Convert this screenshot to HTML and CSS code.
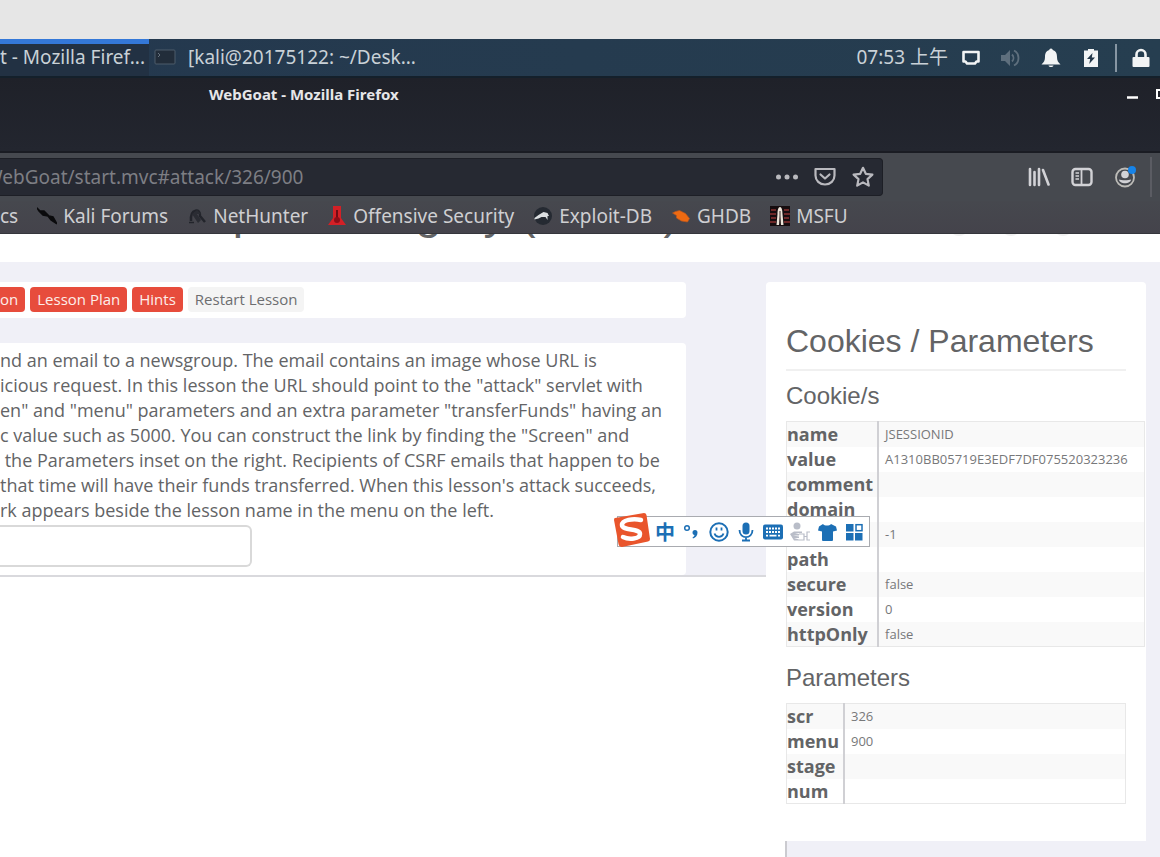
FILE: index.html
```
<!DOCTYPE html>
<html lang="en">
<head>
    <meta charset="UTF-8">
    <meta name="viewport" content="width=device-width, initial-scale=1.0">
    <title>WebGoat - Mozilla Firefox</title>
    <link rel="stylesheet" href="styles.css">
</head>
<body>
    <div class="host-strip"></div>

    <!-- Desktop panel -->
    <header class="panel">
        <button class="task active">t - Mozilla Firef...</button>
        <button class="task">
            <svg width="22" height="16" viewBox="0 0 22 16"><rect x="1" y="1" width="20" height="14" rx="1" fill="#222d3a" stroke="#4d5c6a"/><path d="M4 4l2 2-2 2" fill="none" stroke="#66727e"/></svg>
            [kali@20175122: ~/Desk...
        </button>
        <div class="tray">
            <span class="clock">07:53 上午</span>
            <svg width="20" height="20" viewBox="0 0 20 20"><path d="M2.500 4h15v9.500h-2l-1.500 2h-8l-1.500-2h-2z" fill="none" stroke="#f2f4f5" stroke-width="2.600" stroke-linejoin="round"/></svg>
            <svg width="20" height="20" viewBox="0 0 20 20"><path d="M0 7h4l5-5v16l-5-5H0z" fill="#5e6f7d"/><path d="M11 6.500c2 2 2 5 0 7M13 2.500c6 3 6 12 0 15" fill="none" stroke="#5e6f7d" stroke-width="1.800"/></svg>
            <svg width="20" height="20" viewBox="0 0 20 20"><path d="M10 0.500c1.200 0 1.600.8 1.700 1.600C15 3 16 5.500 16 9c0 3.500 1 5 3.500 7.500H.5C3 14 4 12.500 4 9c0-3.500 1-6 4.300-6.900C8.400 1.300 8.800.5 10 .5zM7.500 17.500h5c-.5 2-4.500 2-5 0z" fill="#f2f4f5"/></svg>
            <svg width="20" height="20" viewBox="0 0 20 20"><path d="M3 2.500h4V1h6v1.500h4V19H3z" fill="#f2f4f5"/><path d="M11.500 5L6 11h3.200l-1 5L14 9.500h-3.200z" fill="#24384a"/></svg>
            <span class="divider"></span>
            <svg width="20" height="20" viewBox="0 0 20 20"><rect x="1.500" y="9" width="17" height="10" rx="1" fill="#f2f4f5"/><path d="M5.500 10V6.500a4.500 4.500 0 0 1 9 0V10" fill="none" stroke="#f2f4f5" stroke-width="2.600"/></svg>
        </div>
    </header>

    <!-- Browser window -->
    <div class="titlebar">
        <span class="window-title">WebGoat - Mozilla Firefox</span>
        <div class="window-buttons">
            <svg width="12" height="12" viewBox="0 0 12 12"><path d="M0 9.500h11" stroke="#fff" stroke-width="2.500"/></svg>
            <svg width="4" height="12" viewBox="0 0 4 12"><path d="M5 2H1v8h4" fill="none" stroke="#fff" stroke-width="2"/></svg>
        </div>
    </div>

    <nav class="toolbar">
        <div class="urlbar">
            <input type="text" value="WebGoat/start.mvc#attack/326/900" aria-label="Address">
            <svg width="22" height="22" viewBox="0 0 22 22" fill="#b9b9be"><circle cx="2.500" cy="11" r="2.500"/><circle cx="11" cy="11" r="2.500"/><circle cx="19.500" cy="11" r="2.500"/></svg>
            <svg width="22" height="22" viewBox="0 0 22 22" fill="none" stroke="#b9b9be" stroke-width="2.200" stroke-linecap="round" stroke-linejoin="round"><path d="M1.500 3h19v6.500c0 5-4 9-9.500 9s-9.500-4-9.500-9z"/><path d="M6.500 8.500l4.500 4 4.500-4"/></svg>
            <svg width="22" height="22" viewBox="0 0 22 22"><path d="M11 1.800l2.800 6 6.600.8-4.900 4.500 1.300 6.500L11 16.400l-5.800 3.200 1.300-6.500L1.600 8.600l6.600-.8z" fill="none" stroke="#b9b9be" stroke-width="2.200" stroke-linejoin="round"/></svg>
        </div>
        <div class="nav-icons">
            <svg width="22" height="22" viewBox="0 0 22 22" stroke="#d2d2d6" stroke-width="2.600" stroke-linecap="round"><path d="M2 3v16M6.500 6v13M11 3v16M15 4l5.500 14.500"/></svg>
            <svg width="22" height="22" viewBox="0 0 22 22" fill="none" stroke="#d2d2d6"><rect x="1.500" y="3" width="19" height="16" rx="3" stroke-width="2.400"/><path d="M10.500 3v16" stroke-width="1.800"/><path d="M4.500 7h3.500M4.500 10h3.500M4.500 13h3.500" stroke-width="1.300"/></svg>
            <svg width="22" height="22" viewBox="0 0 22 22"><circle cx="11" cy="11.500" r="9" fill="none" stroke="#bdbcb8" stroke-width="1.800"/><circle cx="11" cy="8.500" r="3.800" fill="#d2d2d6"/><path d="M5 13.500c2 1 10 1 12 0-.5 5-11.500 5-12 0z" fill="#d2d2d6"/><circle cx="18" cy="4" r="4" fill="#1683e8"/></svg>
        </div>
    </nav>

    <nav class="bookmarks">
        <a href="#">cs</a>
        <a href="#">
            <svg width="20" height="20" viewBox="0 0 20 20"><path d="M0 2l3 3 4 0 5 5 4 1 4 7-6-4-3-4-5-1-4-4z" fill="#0b0b0d" stroke="#0b0b0d" stroke-width="1.500"/></svg>
            Kali Forums
        </a>
        <a href="#">
            <svg width="20" height="20" viewBox="0 0 20 20"><path d="M4 15c-1-13 10-13 9-5l5 6" fill="none" stroke="#22242b" stroke-width="2.500"/><path d="M5 8l5-4 4 4-4 0 4 6-3 3z" fill="#2a2c33"/><path d="M2 16.500h5" stroke="#22242b" stroke-width="1.500"/></svg>
            NetHunter
        </a>
        <a href="#">
            <svg width="20" height="20" viewBox="0 0 20 20"><path d="M6 0h8v12l5 7H1l5-7z" fill="#d32026"/><path d="M9 4h2v8H9z" fill="#6f0d15"/><circle cx="10" cy="14" r="3" fill="#8d0d18"/></svg>
            Offensive Security
        </a>
        <a href="#">
            <svg width="20" height="20" viewBox="0 0 20 20"><circle cx="10" cy="10" r="9" fill="#252a32"/><path d="M1.500 12l4-3 5-3 4 1 1.500 3-1.500 0 0 4-2-3-4 0-3 1.500-4 1z" fill="#dcdfe1"/></svg>
            Exploit-DB
        </a>
        <a href="#">
            <svg width="20" height="20" viewBox="0 0 20 20"><path d="M1.500 7l3-1.500 4-1 6 3 4 5-2 3.500-6-1-5-3 0-2.500z" fill="#ee6a12" stroke="#b7561f" stroke-width=".7"/></svg>
            GHDB
        </a>
        <a href="#">
            <svg width="20" height="20" viewBox="0 0 20 20"><rect width="20" height="20" fill="#160d0f"/><path d="M1 4h5M0 8h6M1 12h5M0 16h6M14 4h5M14 8h6M14 12h5M14 16h6" stroke="#6d2828" stroke-width="2"/><path d="M10 1c2 0 2.500 4 2.500 7l1 11h-2.500l-1-9-1 9H6.500l1-11c0-3 .5-7 2.500-7z" fill="#eee6da"/><path d="M10 5v12" stroke="#3b2d2b"/></svg>
            MSFU
        </a>
    </nav>

    <!-- Lesson page -->
    <div class="lesson-header">
        <h1>ross Site Request Forgery (CSRF)</h1>
        <div class="header-dots"><span></span><span></span><span></span></div>
    </div>

    <div class="page">
        <main>
            <div class="lesson">
                <div class="card lesson-buttons">
                    <button class="btn btn-red cut">on</button>
                    <button class="btn btn-red">Lesson Plan</button>
                    <button class="btn btn-red">Hints</button>
                    <button class="btn">Restart Lesson</button>
                </div>
                <div class="card lesson-text">
                    <p>
                        nd an email to a newsgroup. The email contains an image whose URL is<br>
                        icious request. In this lesson the URL should point to the "attack" servlet with<br>
                        en" and "menu" parameters and an extra parameter "transferFunds" having an<br>
                        c value such as 5000. You can construct the link by finding the "Screen" and<br>
                        &nbsp;the Parameters inset on the right. Recipients of CSRF emails that happen to be<br>
                        that time will have their funds transferred. When this lesson's attack succeeds,<br>
                        rk appears beside the lesson name in the menu on the left.
                    </p>
                    <input type="text" class="lesson-input" aria-label="Title">
                </div>
            </div>
        </main>

        <aside>
            <div class="sidebar">
                <h2>Cookies / Parameters</h2>
                <h3>Cookie/s</h3>
                <table class="cookies">
                    <tr><th>name</th><td>JSESSIONID</td></tr>
                    <tr><th>value</th><td>A1310BB05719E3EDF7DF075520323236</td></tr>
                    <tr><th>comment</th><td></td></tr>
                    <tr><th>domain</th><td></td></tr>
                    <tr><th></th><td>-1</td></tr>
                    <tr><th>path</th><td></td></tr>
                    <tr><th>secure</th><td>false</td></tr>
                    <tr><th>version</th><td>0</td></tr>
                    <tr><th>httpOnly</th><td>false</td></tr>
                </table>
                <h3>Parameters</h3>
                <table class="params">
                    <tr><th>scr</th><td>326</td></tr>
                    <tr><th>menu</th><td>900</td></tr>
                    <tr><th>stage</th><td></td></tr>
                    <tr><th>num</th><td></td></tr>
                </table>
            </div>
            <div class="side-foot"><div></div></div>
        </aside>
    </div>

    <!-- Floating input method bar -->
    <div class="ime">
        <svg class="ime-logo" width="36" height="36" viewBox="0 0 36 36"><path d="M1 6L30 1q2 0 2.500 2L36 27q0 2-2 2.500L8 35q-3 0-3.500-3L0 8q0-2 1-2z" fill="#e9552c"/><path d="M27 8C19 6 8 8 8 13c0 6 18 3 18 9 0 5-11 6-17 3" fill="none" stroke="#fff" stroke-width="4.500" stroke-linecap="round"/></svg>
        <span class="ime-mode">中</span>
        <svg width="20" height="20" viewBox="0 0 20 20"><circle cx="5" cy="6" r="2.300" fill="none" stroke="#1c6fb5" stroke-width="1.500"/><path d="M10.500 10.500a2.500 2.500 0 0 1 5 0c0 3-1.500 5-4.500 6l-.5-1c1.300-.7 1.800-1.500 2-2.500-1.200 0-2-1-2-2.500z" fill="#1c6fb5"/></svg>
        <svg width="20" height="20" viewBox="0 0 20 20"><circle cx="10" cy="10" r="8.700" fill="none" stroke="#1c6fb5" stroke-width="2"/><path d="M7.500 5.500v3M12.500 5.500v3M5.500 11.500c1.500 4.500 7.500 4.500 9 0" fill="none" stroke="#1c6fb5" stroke-width="1.800"/></svg>
        <svg width="20" height="20" viewBox="0 0 20 20"><rect x="6.500" y="0.500" width="7" height="12" rx="3.500" fill="#1c6fb5"/><path d="M3.500 8c0 9.500 13 9.500 13 0M10 15v4M6 18.500h8" fill="none" stroke="#1c6fb5" stroke-width="1.800"/></svg>
        <svg width="20" height="20" viewBox="0 0 20 20"><rect x="0" y="2.500" width="20" height="15" rx="2" fill="#1c6fb5"/><path d="M3 6.500h14M3 10h14" stroke="#fff" stroke-width="2" stroke-dasharray="2 1"/><path d="M3 13.700h2M6.500 13.700h7M15 13.700h2" stroke="#fff" stroke-width="1.800"/></svg>
        <svg width="20" height="20" viewBox="0 0 20 20"><circle cx="7" cy="4" r="3.500" fill="#b9bdc8"/><path d="M0 12l4-2.500h8v1.500H5l4 1v1.500H3l6 1v1.500H4l5 1.500v1H4z" fill="#b9bdc8"/><path d="M9 12h5v6H9M20 10h-3v8h3M14 14.500h3" fill="none" stroke="#b9bdc8" stroke-width="1.200"/></svg>
        <svg width="20" height="20" viewBox="0 0 20 20"><path d="M6 2c1.500 2 6.500 2 8 0l5 2.500 1 4-4 1V18q0 1-1 1H6q-1 0-1-1V9.500l-4-1 1-4z" fill="#1c6fb5"/></svg>
        <svg width="20" height="20" viewBox="0 0 20 20"><path d="M2 2h7.500v7.500H2zM2 11h7.500v7.500H2zM11 11h7.500v7.500H11z" fill="#1c6fb5"/><rect x="12" y="2.700" width="6" height="6" fill="#fff" stroke="#1c6fb5" stroke-width="1.500"/></svg>
    </div>
</body>
</html>
```
FILE: styles.css
```
* {
    margin: 0;
    padding: 0;
    box-sizing: border-box;
}

body {
    position: relative;
    min-height: 100vh;
    display: flex;
    flex-direction: column;
    overflow: hidden;
    background: #fff;
    color: #636466;
    font-family: "Open Sans", "Noto Sans CJK SC", sans-serif;
}

svg {
    flex: none;
    display: block;
}

button,
input {
    border: none;
    font-family: inherit;
}

.host-strip {
    height: 39px;
    background: #e6e6e6;
}

/* Panel */
.panel {
    height: 39px;
    display: flex;
    background: linear-gradient(90deg, #24384e, #263e50);
    border-bottom: 2px solid #14202b;
    font-family: "Noto Sans", "Noto Sans CJK SC", sans-serif;
    color: #c9d1d7;
}

.task {
    display: flex;
    align-items: center;
    gap: 12px;
    padding: 0 0 2px 5px;
    background: none;
    color: inherit;
    font-size: 19px;
    line-height: 24px;
    white-space: nowrap;
}

.task.active {
    width: 149px;
    padding: 0 4px 2px 0;
    justify-content: flex-end;
    background: #223143;
    box-shadow: inset 0 5px #3478d8;
}

.tray {
    margin-left: auto;
    padding-right: 9px;
    display: flex;
    align-items: center;
    gap: 20px;
}

.clock {
    margin-right: -7px;
    padding-bottom: 2px;
    font-size: 19px;
    line-height: 24px;
}

.divider {
    width: 2px;
    height: 28px;
    margin: 0 -6px;
    background: #8796a3;
}

/* Window */
.titlebar {
    height: 75px;
    padding: 6px 0 0 209px;
    display: flex;
    align-items: flex-start;
    justify-content: space-between;
    background: linear-gradient(#1f2129, #23262f);
    border-bottom: 2px solid #1a1c23;
    color: #e6e6e8;
}

.window-title {
    font-family: "Noto Sans", sans-serif;
    font-size: 15px;
    font-weight: 700;
    line-height: 20px;
}

.window-buttons {
    display: flex;
    gap: 17px;
    padding-top: 4px;
}

.toolbar {
    height: 48px;
    padding-right: 8px;
    display: flex;
    align-items: center;
    background: #46494f;
}

.urlbar {
    flex: 1;
    height: 38px;
    padding-right: 8px;
    display: flex;
    align-items: center;
    gap: 16px;
    background: #262932;
    border: 1px solid #1d1f26;
    border-left: none;
    border-radius: 0 4px 4px 0;
}

.urlbar input {
    flex: 1;
    min-width: 0;
    background: none;
    color: #7d7e84;
    font-family: "Noto Sans", sans-serif;
    font-size: 19px;
    text-indent: -15px;
}

.nav-icons {
    height: 40px;
    margin-left: 145px;
    padding-right: 14px;
    display: flex;
    align-items: center;
    gap: 21px;
    border-right: 2px solid #5b5c63;
}

.bookmarks {
    height: 33px;
    padding-bottom: 2px;
    display: flex;
    align-items: center;
    gap: 19px;
    background: linear-gradient(#46484e, #44434b);
    border-bottom: 1px solid #35363c;
    font-family: "Noto Sans", sans-serif;
}

.bookmarks a {
    display: flex;
    align-items: center;
    gap: 6px;
    color: #cfcfd2;
    font-size: 19px;
    line-height: 24px;
    text-decoration: none;
    white-space: nowrap;
}

/* Lesson page */
.lesson-header {
    height: 28px;
    display: flex;
    justify-content: space-between;
    overflow: hidden;
}

.lesson-header h1 {
    margin: -49px 0 0 -39px;
    font: 47px/54px "Liberation Sans", sans-serif;
    white-space: nowrap;
}

.header-dots {
    display: flex;
    gap: 32px;
    margin: -18px 87px 0 0;
}

.header-dots span {
    width: 20px;
    height: 20px;
    border-radius: 10px;
    background: #f0f0f0;
}

.page {
    flex: 1;
    display: grid;
    grid-template-columns: 1fr 394px;
}

.lesson {
    padding: 20px 80px 0 0;
    background: #f0f0f7;
    border-bottom: 2px solid #d9d9dd;
}

.card {
    background: #fff;
    border-radius: 0 4px 4px 0;
}

.lesson-buttons {
    display: flex;
    gap: 5px;
    padding: 5px 0 6px;
    margin-bottom: 25px;
}

.btn {
    height: 25px;
    padding: 0 7px;
    border-radius: 4px;
    background: #f4f4f4;
    color: #6d6e70;
    font-size: 15px;
    line-height: 25px;
}

.btn-red {
    background: #e74c3c;
    color: #fdeeea;
}

.btn.cut {
    padding-left: 0;
    border-radius: 0 4px 4px 0;
}

.lesson-text {
    padding: 5px 0 8px;
}

.lesson-text p {
    font-size: 18px;
    line-height: 25px;
    white-space: nowrap;
}

.lesson-input {
    display: block;
    width: 252px;
    height: 42px;
    margin-top: 2px;
    background: #fff;
    border: 2px solid #d9d9d9;
    border-left: none;
    border-radius: 0 6px 6px 0;
}

/* Sidebar */
aside {
    display: flex;
    flex-direction: column;
    padding: 20px 0 0;
    background: #f0f0f7;
}

.sidebar {
    margin-right: 14px;
    padding: 40px 20px 37px;
    background: #fff;
    border-radius: 4px 4px 0 0;
}

.sidebar h2,
.sidebar h3 {
    font-family: "Liberation Sans", sans-serif;
    font-weight: 400;
}

.sidebar h2 {
    height: 49px;
    font-size: 32px;
    line-height: 38px;
    border-bottom: 2px solid #f0f0f0;
}

.sidebar h3 {
    padding: 10px 0;
    font-size: 24px;
    line-height: 30px;
}

table {
    width: 100%;
    border-collapse: collapse;
    border: 1px solid #e8e8e8;
}

.cookies {
    width: calc(100% + 19px);
    margin-bottom: 6px;
}

tr {
    height: 25px;
}

tr:nth-child(odd) {
    background: #f9f9f9;
}

th {
    width: 1px;
    padding: 0 4px 0 0;
    border-right: 2px solid #d0d0d4;
    font-size: 18px;
    line-height: 24px;
    text-align: left;
}

td {
    padding: 0 4px 0 6px;
    font-size: 13px;
    line-height: 24px;
    color: #77787a;
}

.side-foot {
    flex: 1;
    display: flex;
    padding-left: 19px;
    background: #fff;
}

.side-foot div {
    flex: 1;
    background: #f0f0f7;
    border-left: 2px solid #cbcbd0;
}

/* Floating over the page */
.ime {
    position: absolute;
    top: 516px;
    right: 290px;
    height: 31px;
    padding-right: 5px;
    display: flex;
    align-items: center;
    gap: 7px;
    background: #fff;
    border: 1px solid #a9abb0;
    color: #1c6fb5;
}

.ime-logo {
    margin: -4px -2px 0 -4px;
}

.ime-mode {
    width: 20px;
    font: 700 20px/20px "Noto Sans CJK SC", sans-serif;
}
```
